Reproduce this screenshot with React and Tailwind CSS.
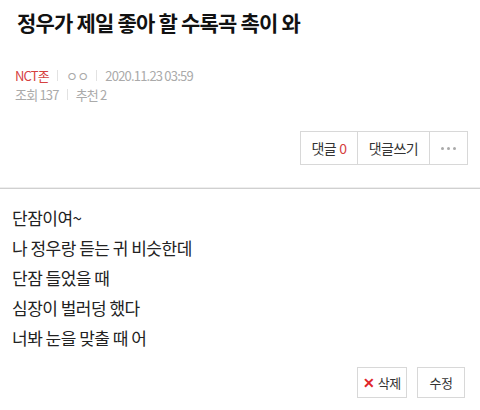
import React from "react";

const font = { fontFamily: '"Noto Sans CJK KR", "Noto Sans", sans-serif' };

export default function App() {
  const lines = [
    "단잠이여~",
    "나 정우랑 듣는 귀 비슷한데",
    "단잠 들었을 때",
    "심장이 벌러덩 했다",
    "너봐 눈을 맞출 때 어",
  ];
  return (
    <div className="w-[480px] h-[410px] bg-white overflow-hidden" style={font}>
      <div className="px-[17px] pt-[7px]">
        <h1 className="text-[21px] leading-[30px] font-bold text-[#111] tracking-[-0.8px]">
          정우가 제일 좋아 할 수록곡 촉이 와
        </h1>
      </div>
      <div className="px-[15px] pt-[29px] text-[13px] leading-[19px] tracking-[-0.8px] text-[#aaa]">
        <div className="flex items-center">
          <span className="text-[#d6413f]">NCT존</span>
          <span className="mx-[8px] w-px h-[11px] bg-[#e2e2e2]" />
          <span>ㅇㅇ</span>
          <span className="mx-[8px] w-px h-[11px] bg-[#e2e2e2]" />
          <span>2020.11.23 03:59</span>
        </div>
        <div className="flex items-center">
          <span>조회 137</span>
          <span className="mx-[8px] w-px h-[11px] bg-[#e2e2e2]" />
          <span>추천 2</span>
        </div>
      </div>
      <div className="flex justify-end pr-[12px] mt-[27px]">
        <div className="flex h-[34px] border border-[#d8d8d8] text-[14px] text-[#333] tracking-[-0.5px]">
          <div className="w-[57px] flex items-center justify-center border-r border-[#d8d8d8]">
            댓글<span className="ml-[3px] text-[#d6413f]">0</span>
          </div>
          <div className="w-[72px] flex items-center justify-center border-r border-[#d8d8d8]">
            댓글쓰기
          </div>
          <div className="w-[37px] flex items-center justify-center gap-[3px]">
            <span className="w-[3px] h-[3px] rounded-full bg-[#aaa]" />
            <span className="w-[3px] h-[3px] rounded-full bg-[#aaa]" />
            <span className="w-[3px] h-[3px] rounded-full bg-[#aaa]" />
          </div>
        </div>
      </div>
      <div className="mt-[22px] border-t border-[#eeeeee]" />
      <div className="border-t border-[#d0d0d0]" />
      <div className="px-[12px] pt-[14px] text-[17px] leading-[30px] text-[#222] tracking-[-0.5px]">
        {lines.map((l, i) => (
          <div key={i}>{l}</div>
        ))}
      </div>
      <div className="flex justify-end gap-[10px] pr-[15px] mt-[14px]">
        <div className="h-[31px] w-[50px] flex items-center justify-center border border-[#d8d8d8] text-[13px] text-[#333] tracking-[-0.5px]">
          <span className="text-[#e0242a] font-bold mr-[3px] text-[14px]">✕</span>삭제
        </div>
        <div className="h-[31px] w-[48px] flex items-center justify-center border border-[#d8d8d8] text-[13px] text-[#333] tracking-[-0.5px]">
          수정
        </div>
      </div>
    </div>
  );
}
